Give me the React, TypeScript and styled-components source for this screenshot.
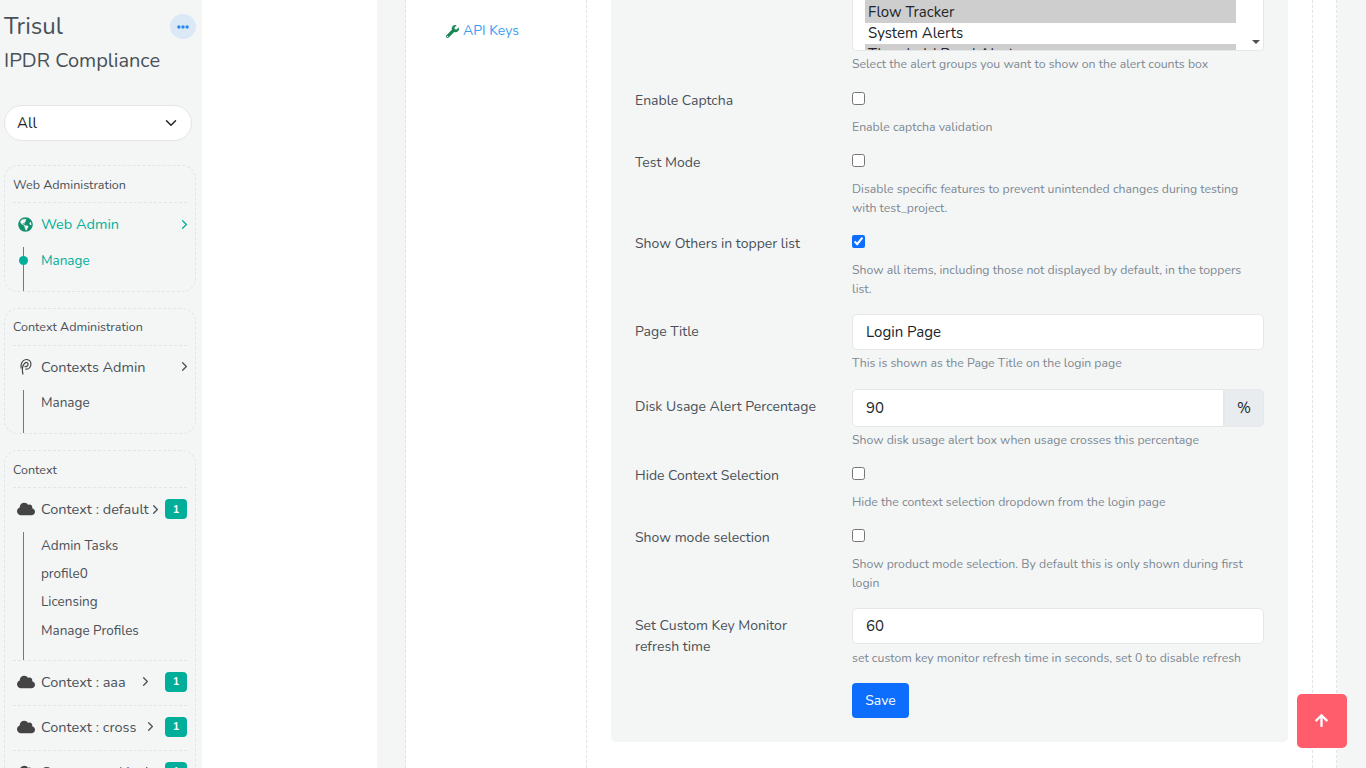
import React from "react";
import styled, { createGlobalStyle } from "styled-components";
import { FaArrowUp, FaCloud, FaEllipsisH, FaGlobeAmericas, FaWrench } from "react-icons/fa";
import { FiChevronDown, FiChevronRight } from "react-icons/fi";

const GlobalStyle = createGlobalStyle`
  html, body {
    margin: 0;
    padding: 0;
    height: 768px;
    overflow: hidden;
    background: #fff;
    font-family: "Nunito", "Lato", "Open Sans", sans-serif;
    color: #495057;
  }
  * {
    box-sizing: border-box;
  }
`;

const Page = styled.div`
  display: flex;
  width: 1366px;
  height: 768px;
  overflow: hidden;
  position: relative;
`;

const Sidebar = styled.aside`
  width: 202px;
  flex: none;
  height: 768px;
  overflow: hidden;
  background: #f4f6f6;
  padding: 11px 6px 0 4px;
`;

const BrandRow = styled.div`
  display: flex;
  align-items: flex-start;
  justify-content: space-between;
`;

const Brand = styled.div`
  font-size: 24px;
  line-height: 30px;
  color: #495057;
`;

const Product = styled.div`
  font-size: 20px;
  line-height: 26px;
  margin-top: 7px;
  color: #495057;
`;

const MoreButton = styled.span`
  width: 26px;
  height: 25px;
  margin-top: 3px;
  border-radius: 50%;
  background: #dbe8f6;
  color: #2a8cf0;
  display: flex;
  align-items: center;
  justify-content: center;
  font-size: 12px;
`;

const ContextSelect = styled.div`
  display: flex;
  align-items: center;
  justify-content: space-between;
  height: 36px;
  margin: 31px 4px 24px 0;
  padding: 0 11px 0 12px;
  background: #fff;
  border: 1px solid #e5e5e5;
  border-radius: 18px;
  font-size: 15px;
  color: #212529;
`;

const NavCard = styled.section`
  border: 1px dashed #e2e5e5;
  border-radius: 14px;
  padding: 0 8px;
  margin-bottom: 16px;
`;

const NavTitle = styled.div`
  height: 37px;
  display: flex;
  align-items: center;
  font-size: 12.5px;
  color: #495057;
  border-bottom: 1px dashed #e2e5e5;
`;

const NavItem = styled.div<{ $active?: boolean; $divided?: boolean }>`
  display: flex;
  align-items: center;
  height: ${(p) => (p.$divided ? "45px" : "44px")};
  padding-bottom: ${(p) => (p.$divided ? "3px" : "2px")};
  font-size: 14.5px;
  white-space: nowrap;
  color: ${(p) => (p.$active ? "#00ae99" : "#495057")};
  ${(p) => p.$divided && "border-top: 1px dashed #e2e5e5;"}
`;

const NavIcon = styled.span<{ $active?: boolean }>`
  width: 28px;
  flex: none;
  display: flex;
  justify-content: center;
  padding-right: 3px;
  font-size: ${(p) => (p.$active ? "15px" : "18px")};
  color: ${(p) => (p.$active ? "#12916f" : "#444")};
`;

const Chevron = styled.span<{ $gap?: number }>`
  display: flex;
  flex: none;
  font-size: 15px;
  margin-left: ${(p) => (p.$gap === undefined ? "auto" : `${p.$gap}px`)};
  margin-right: ${(p) => (p.$gap === undefined ? "-5px" : "auto")};
`;

const Badge = styled.span`
  width: 22px;
  height: 20px;
  flex: none;
  border-radius: 4px;
  background: #00ae99;
  color: #fff;
  font-size: 11px;
  font-weight: 700;
  display: flex;
  align-items: center;
  justify-content: center;
`;

const SubList = styled.div<{ $bottom: number }>`
  margin-left: 10px;
  padding: 0 0 ${(p) => p.$bottom}px 17px;
  border-left: 1px solid #00ae99;
`;

const SubItem = styled.div<{ $active?: boolean; $height?: number }>`
  position: relative;
  height: ${(p) => p.$height ?? 28}px;
  display: flex;
  align-items: center;
  font-size: 13.5px;
  color: ${(p) => (p.$active ? "#00ae99" : "#495057")};
`;

const Dot = styled.span`
  position: absolute;
  left: -22.5px;
  top: 50%;
  margin-top: -4.5px;
  width: 9px;
  height: 9px;
  border-radius: 50%;
  background: #00ae99;
`;

const Gutter = styled.div`
  width: 175px;
  flex: none;
`;

const LeftBand = styled.div`
  width: 29px;
  flex: none;
  background: linear-gradient(to right, #f4f6f6 28px, #fff 28px);
  border-right: 1px dashed #e2e5e5;
`;

const MenuColumn = styled.nav`
  width: 181px;
  flex: none;
  border-right: 1px dashed #e2e5e5;
  padding: 22px 0 0 40px;
`;

const MenuLink = styled.div`
  display: flex;
  align-items: center;
  gap: 4px;
  font-size: 14px;
  line-height: 18px;
  color: #3d9df2;

  svg {
    color: #198754;
    font-size: 13px;
  }
`;

const Content = styled.main`
  width: 725px;
  flex: none;
  padding: 0 24px;
`;

const FormPanel = styled.div`
  height: 742px;
  background: #f4f6f6;
  border-radius: 0 0 5px 5px;
  padding-left: 24px;
`;

const FormRow = styled.div<{ $height: number }>`
  display: flex;
  height: ${(p) => p.$height}px;
`;

const RowLabel = styled.label<{ $top?: number }>`
  width: 217px;
  flex: none;
  padding-top: ${(p) => p.$top ?? 0}px;
  padding-right: 30px;
  font-size: 14px;
  line-height: 21px;
  color: #495057;
`;

const RowField = styled.div`
  width: 412px;
  flex: none;
`;

const Hint = styled.div<{ $top?: number }>`
  margin-top: ${(p) => p.$top ?? 4}px;
  max-width: 396px;
  font-size: 12.25px;
  line-height: 19px;
  color: #7c8791;
`;

const ListBox = styled.div`
  position: relative;
  height: 51px;
  overflow: hidden;
  background: #fff;
  border: 1px solid #e5e7e8;
  border-top: none;
  border-radius: 0 0 5px 5px;
  padding-left: 12px;
  padding-right: 27px;
  font-size: 15px;
  color: #212529;
`;

const ListOption = styled.div<{ $selected?: boolean; $height: number }>`
  height: ${(p) => p.$height}px;
  line-height: 21px;
  padding-left: 3px;
  background: ${(p) => (p.$selected ? "#cecece" : "#fff")};
  display: flex;
  align-items: flex-end;
  white-space: nowrap;
`;

const ScrollArrow = styled.span`
  position: absolute;
  right: 3px;
  bottom: 6px;
  width: 0;
  height: 0;
  border-left: 4px solid transparent;
  border-right: 4px solid transparent;
  border-top: 4px solid #505050;
`;

const CheckBox = styled.input.attrs({ type: "checkbox" })`
  display: block;
  width: 13px;
  height: 13px;
  margin: 2px 0 0;
  accent-color: #0d6efd;
`;

const TextBox = styled.div<{ $joined?: boolean }>`
  display: flex;
  align-items: center;
  flex: 1;
  height: ${(p) => (p.$joined ? "38px" : "36px")};
  padding: 0 13px ${(p) => (p.$joined ? "1px" : "0")};
  background: #fff;
  border: 1px solid #e5e7e8;
  border-radius: ${(p) => (p.$joined ? "5px 0 0 5px" : "5px")};
  font-size: 15px;
  color: #212529;
`;

const InputGroup = styled.div`
  display: flex;
`;

const Addon = styled.div`
  width: 40px;
  height: 38px;
  background: #e9ecef;
  border: 1px solid #e5e7e8;
  border-radius: 0 5px 5px 0;
  display: flex;
  align-items: center;
  justify-content: center;
  font-size: 15px;
  color: #212529;
`;

const SaveButton = styled.button`
  display: block;
  width: 57px;
  height: 35px;
  margin: 0;
  padding: 0;
  border: none;
  border-radius: 4px;
  background: #0d6efd;
  color: #fff;
  font-family: inherit;
  font-size: 14px;
`;

const ScrollTop = styled.div`
  position: absolute;
  left: 1297px;
  top: 694px;
  width: 50px;
  height: 54px;
  padding: 0 2px 2px 0;
  border-radius: 5px;
  background: #ff5c6c;
  color: #fff;
  display: flex;
  align-items: center;
  justify-content: center;
  font-size: 15px;
`;

const RightInner = styled.div`
  width: 25px;
  flex: none;
  border-left: 1px dashed #e2e5e5;
  border-right: 1px dashed #e2e5e5;
`;

const RightBand = styled.div`
  flex: 1;
  background: #f4f6f6;
`;

const ContextsIcon = () => (
  <svg width="14" height="18" viewBox="0 0 14 18" fill="none" stroke="#444" strokeWidth="1.2">
    <path d="M4 16.5 C3 12 3.5 7 6 5 C7.5 3.8 9.5 4.8 9 6.8 C8.6 8.3 6.8 9 5.6 8.4" />
    <path d="M2.2 10.5 C1 6 3.5 1.8 7 1.5 C10.8 1.2 12.6 4.5 11.8 7.4 C11 10.2 8.5 11.6 6.4 11" />
  </svg>
);

const App: React.FC = () => {
  return (
    <>
      <GlobalStyle />
      <Page>
        <Sidebar>
          <BrandRow>
            <div>
              <Brand>Trisul</Brand>
              <Product>IPDR Compliance</Product>
            </div>
            <MoreButton>
              <FaEllipsisH />
            </MoreButton>
          </BrandRow>
          <ContextSelect>
            All
            <FiChevronDown size={18} />
          </ContextSelect>

          <NavCard>
            <NavTitle>Web Administration</NavTitle>
            <NavItem $active>
              <NavIcon $active>
                <FaGlobeAmericas />
              </NavIcon>
              Web Admin
              <Chevron>
                <FiChevronRight />
              </Chevron>
            </NavItem>
            <SubList $bottom={17.5}>
              <SubItem $active $height={26}>
                <Dot />
                Manage
              </SubItem>
            </SubList>
          </NavCard>

          <NavCard>
            <NavTitle>Context Administration</NavTitle>
            <NavItem>
              <NavIcon>
                <ContextsIcon />
              </NavIcon>
              Contexts Admin
              <Chevron>
                <FiChevronRight />
              </Chevron>
            </NavItem>
            <SubList $bottom={17.5}>
              <SubItem $height={26}>Manage</SubItem>
            </SubList>
          </NavCard>

          <NavCard>
            <NavTitle>Context</NavTitle>
            <NavItem>
              <NavIcon>
                <FaCloud />
              </NavIcon>
              Context : default
              <Chevron $gap={-1}>
                <FiChevronRight />
              </Chevron>
              <Badge>1</Badge>
            </NavItem>
            <SubList $bottom={15}>
              <SubItem $height={27}>Admin Tasks</SubItem>
              <SubItem>profile0</SubItem>
              <SubItem>Licensing</SubItem>
              <SubItem $height={30}>Manage Profiles</SubItem>
            </SubList>
            <NavItem $divided>
              <NavIcon>
                <FaCloud />
              </NavIcon>
              Context : aaa
              <Chevron $gap={12}>
                <FiChevronRight />
              </Chevron>
              <Badge>1</Badge>
            </NavItem>
            <NavItem $divided>
              <NavIcon>
                <FaCloud />
              </NavIcon>
              Context : cross
              <Chevron $gap={6}>
                <FiChevronRight />
              </Chevron>
              <Badge>1</Badge>
            </NavItem>
            <NavItem $divided>
              <NavIcon>
                <FaCloud />
              </NavIcon>
              Context : nokia
              <Chevron $gap={4}>
                <FiChevronRight />
              </Chevron>
              <Badge>1</Badge>
            </NavItem>
          </NavCard>
        </Sidebar>

        <Gutter />
        <LeftBand />
        <MenuColumn>
          <MenuLink>
            <FaWrench />
            API Keys
          </MenuLink>
        </MenuColumn>

        <Content>
          <FormPanel>
            <FormRow $height={90}>
              <RowLabel />
              <RowField>
                <ListBox>
                  <ListOption $selected $height={23}>Flow Tracker</ListOption>
                  <ListOption $height={21}>System Alerts</ListOption>
                  <ListOption $selected $height={21}>Threshold Band Alerts</ListOption>
                  <ScrollArrow />
                </ListBox>
                <Hint>Select the alert groups you want to show on the alert counts box</Hint>
              </RowField>
            </FormRow>

            <FormRow $height={62}>
              <RowLabel>Enable Captcha</RowLabel>
              <RowField>
                <CheckBox />
                <Hint $top={13}>Enable captcha validation</Hint>
              </RowField>
            </FormRow>

            <FormRow $height={81}>
              <RowLabel>Test Mode</RowLabel>
              <RowField>
                <CheckBox />
                <Hint $top={13}>
                  Disable specific features to prevent unintended changes during testing with test_project.
                </Hint>
              </RowField>
            </FormRow>

            <FormRow $height={81}>
              <RowLabel>Show Others in topper list</RowLabel>
              <RowField>
                <CheckBox defaultChecked />
                <Hint $top={13}>
                  Show all items, including those not displayed by default, in the toppers list.
                </Hint>
              </RowField>
            </FormRow>

            <FormRow $height={75}>
              <RowLabel $top={7}>Page Title</RowLabel>
              <RowField>
                <TextBox>Login Page</TextBox>
                <Hint>This is shown as the Page Title on the login page</Hint>
              </RowField>
            </FormRow>

            <FormRow $height={76}>
              <RowLabel $top={7}>Disk Usage Alert Percentage</RowLabel>
              <RowField>
                <InputGroup>
                  <TextBox $joined>90</TextBox>
                  <Addon>%</Addon>
                </InputGroup>
                <Hint>Show disk usage alert box when usage crosses this percentage</Hint>
              </RowField>
            </FormRow>

            <FormRow $height={62}>
              <RowLabel>Hide Context Selection</RowLabel>
              <RowField>
                <CheckBox />
                <Hint $top={13}>Hide the context selection dropdown from the login page</Hint>
              </RowField>
            </FormRow>

            <FormRow $height={81}>
              <RowLabel>Show mode selection</RowLabel>
              <RowField>
                <CheckBox />
                <Hint $top={13}>
                  Show product mode selection. By default this is only shown during first login
                </Hint>
              </RowField>
            </FormRow>

            <FormRow $height={75}>
              <RowLabel $top={7}>Set Custom Key Monitor refresh time</RowLabel>
              <RowField>
                <TextBox>60</TextBox>
                <Hint $top={5}>set custom key monitor refresh time in seconds, set 0 to disable refresh</Hint>
              </RowField>
            </FormRow>

            <FormRow $height={40}>
              <RowLabel />
              <RowField>
                <SaveButton>Save</SaveButton>
              </RowField>
            </FormRow>
          </FormPanel>
        </Content>

        <RightInner />
        <RightBand />
        <ScrollTop>
          <FaArrowUp />
        </ScrollTop>
      </Page>
    </>
  );
};

export default App;
